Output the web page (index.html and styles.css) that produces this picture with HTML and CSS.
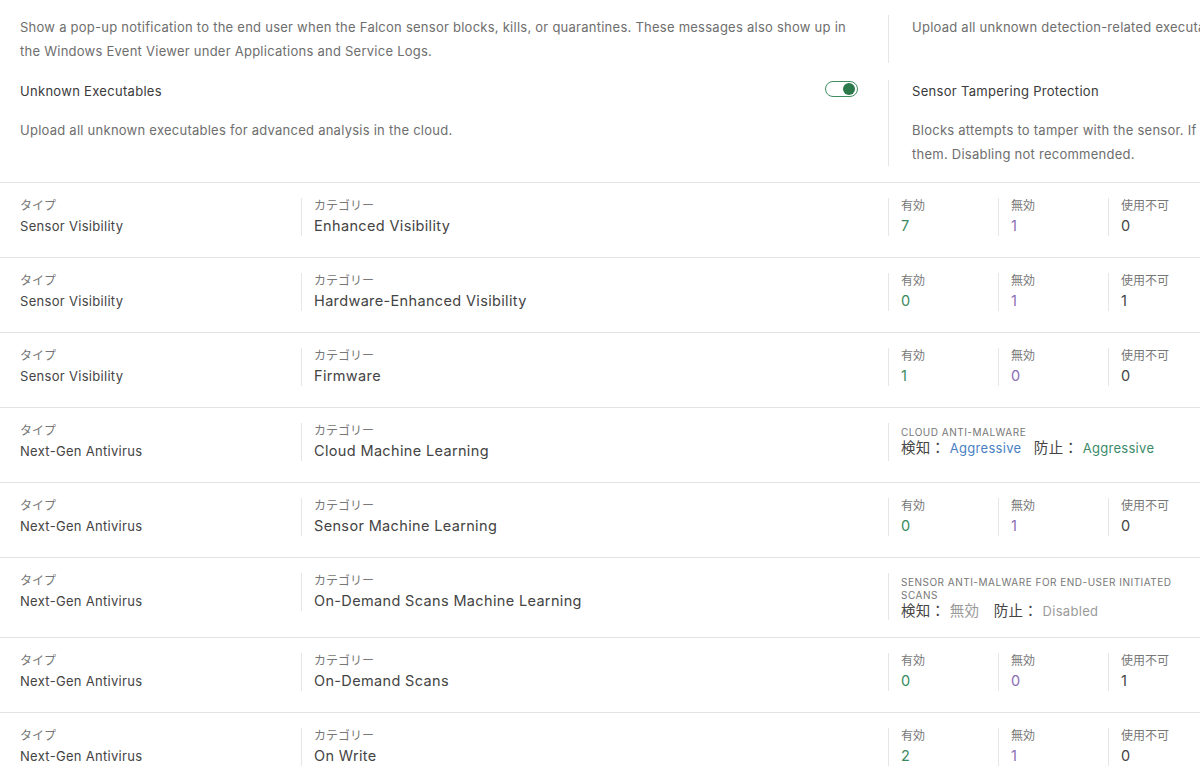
FILE: index.html
```html
<!DOCTYPE html>
<html lang="ja">
<head>
    <meta charset="UTF-8">
    <meta name="viewport" content="width=device-width, initial-scale=1.0">
    <title>Prevention Policy</title>
    <link rel="stylesheet" href="styles.css">
</head>
<body>
    <div class="page">
        <div class="settings">
            <div class="setting">
                <p class="desc">Show a pop-up notification to the end user when the Falcon sensor blocks, kills, or quarantines. These messages also show up in the Windows Event Viewer under Applications and Service Logs.</p>
            </div>
            <div class="setting side">
                <p class="desc">Upload all unknown detection-related executables for advanced analysis in the cloud.</p>
            </div>
            <div class="setting">
                <div class="setting-head">
                    <span class="title">Unknown Executables</span>
                    <span class="toggle on"><span class="knob"></span></span>
                </div>
                <p class="desc">Upload all unknown executables for advanced analysis in the cloud.</p>
            </div>
            <div class="setting side">
                <div class="setting-head">
                    <span class="title">Sensor Tampering Protection</span>
                </div>
                <p class="desc">Blocks attempts to tamper with the sensor. If disabled, the sensor does not block attempts to tamper with them. Disabling not recommended.</p>
            </div>
        </div>

        <div class="rows">
            <div class="row">
                <div class="cell type"><div class="label">タイプ</div><div class="value">Sensor Visibility</div></div>
                <div class="cell cat"><div class="label">カテゴリー</div><div class="value">Enhanced Visibility</div></div>
                <div class="counts">
                    <div class="cell count"><div class="label">有効</div><div class="num on">7</div></div>
                    <div class="cell count"><div class="label">無効</div><div class="num off">1</div></div>
                    <div class="cell count"><div class="label">使用不可</div><div class="num na">0</div></div>
                </div>
            </div>
            <div class="row">
                <div class="cell type"><div class="label">タイプ</div><div class="value">Sensor Visibility</div></div>
                <div class="cell cat"><div class="label">カテゴリー</div><div class="value">Hardware-Enhanced Visibility</div></div>
                <div class="counts">
                    <div class="cell count"><div class="label">有効</div><div class="num on">0</div></div>
                    <div class="cell count"><div class="label">無効</div><div class="num off">1</div></div>
                    <div class="cell count"><div class="label">使用不可</div><div class="num na">1</div></div>
                </div>
            </div>
            <div class="row">
                <div class="cell type"><div class="label">タイプ</div><div class="value">Sensor Visibility</div></div>
                <div class="cell cat"><div class="label">カテゴリー</div><div class="value">Firmware</div></div>
                <div class="counts">
                    <div class="cell count"><div class="label">有効</div><div class="num on">1</div></div>
                    <div class="cell count"><div class="label">無効</div><div class="num off">0</div></div>
                    <div class="cell count"><div class="label">使用不可</div><div class="num na">0</div></div>
                </div>
            </div>
            <div class="row">
                <div class="cell type"><div class="label">タイプ</div><div class="value">Next-Gen Antivirus</div></div>
                <div class="cell cat"><div class="label">カテゴリー</div><div class="value">Cloud Machine Learning</div></div>
                <div class="cell ml">
                    <div class="ml-label">Cloud Anti-Malware</div>
                    <div class="ml-value">検知： <span class="level detect">Aggressive</span> 防止： <span class="level prevent">Aggressive</span></div>
                </div>
            </div>
            <div class="row">
                <div class="cell type"><div class="label">タイプ</div><div class="value">Next-Gen Antivirus</div></div>
                <div class="cell cat"><div class="label">カテゴリー</div><div class="value">Sensor Machine Learning</div></div>
                <div class="counts">
                    <div class="cell count"><div class="label">有効</div><div class="num on">0</div></div>
                    <div class="cell count"><div class="label">無効</div><div class="num off">1</div></div>
                    <div class="cell count"><div class="label">使用不可</div><div class="num na">0</div></div>
                </div>
            </div>
            <div class="row">
                <div class="cell type"><div class="label">タイプ</div><div class="value">Next-Gen Antivirus</div></div>
                <div class="cell cat"><div class="label">カテゴリー</div><div class="value">On-Demand Scans Machine Learning</div></div>
                <div class="cell ml">
                    <div class="ml-label">Sensor Anti-Malware for End-User Initiated Scans</div>
                    <div class="ml-value">検知： <span class="level disabled ja">無効</span> 防止： <span class="level disabled">Disabled</span></div>
                </div>
            </div>
            <div class="row">
                <div class="cell type"><div class="label">タイプ</div><div class="value">Next-Gen Antivirus</div></div>
                <div class="cell cat"><div class="label">カテゴリー</div><div class="value">On-Demand Scans</div></div>
                <div class="counts">
                    <div class="cell count"><div class="label">有効</div><div class="num on">0</div></div>
                    <div class="cell count"><div class="label">無効</div><div class="num off">0</div></div>
                    <div class="cell count"><div class="label">使用不可</div><div class="num na">1</div></div>
                </div>
            </div>
            <div class="row">
                <div class="cell type"><div class="label">タイプ</div><div class="value">Next-Gen Antivirus</div></div>
                <div class="cell cat"><div class="label">カテゴリー</div><div class="value">On Write</div></div>
                <div class="counts">
                    <div class="cell count"><div class="label">有効</div><div class="num on">2</div></div>
                    <div class="cell count"><div class="label">無効</div><div class="num off">1</div></div>
                    <div class="cell count"><div class="label">使用不可</div><div class="num na">0</div></div>
                </div>
            </div>
        </div>
    </div>
</body>
</html>
```

FILE: styles.css
```css
body {
    margin: 0;
    background: #fff;
    font-family: Inter, "Noto Sans CJK JP", sans-serif;
    color: #3c3c3c;
    overflow: hidden;
}

.page {
    width: 1600px;
}

p {
    margin: 0;
}

/* top settings block */
.settings {
    display: grid;
    grid-template-columns: 868px 720px;
    row-gap: 17px;
    padding: 15px 0 16px 20px;
    border-bottom: 1px solid #e3e3e3;
}

.setting {
    padding-right: 30px;
}

.setting.side {
    border-left: 1px solid #e6e6e6;
    padding-left: 23px;
    padding-right: 20px;
}

.setting-head {
    display: flex;
    justify-content: space-between;
    align-items: center;
    height: 22px;
    margin-bottom: 16px;
}

.title {
    font-size: 13px;
    letter-spacing: 0.3px;
    color: #3a3a3a;
}

.desc {
    font-size: 13px;
    line-height: 24px;
    letter-spacing: 0.25px;
    color: #6e6e6e;
}

.toggle {
    position: relative;
    width: 31px;
    height: 14px;
    border: 1.5px solid #3f8d5f;
    border-radius: 10px;
    margin-top: -5px;
}

.toggle .knob {
    position: absolute;
    right: 2px;
    top: 1px;
    width: 12px;
    height: 12px;
    border-radius: 50%;
    background: #2c7a4b;
}

/* rows */
.row {
    display: grid;
    grid-template-columns: 281px 587px 1fr;
    align-items: start;
    min-height: 75px;
    box-sizing: border-box;
    padding: 15px 0 17px 20px;
    border-bottom: 1px solid #e3e3e3;
}

.cell {
    min-height: 38px;
}

.cell.cat,
.cell.count,
.cell.ml {
    border-left: 1px solid #e6e6e6;
    padding-left: 12px;
}

.label {
    font-size: 12px;
    line-height: 16px;
    color: #777;
}

.value {
    margin-top: 2px;
    font-size: 13px;
    line-height: 20px;
    letter-spacing: 0.3px;
    color: #444;
}

.cat .value {
    font-size: 14.5px;
    letter-spacing: 0.35px;
}

.counts {
    display: grid;
    grid-template-columns: 110px 110px 110px;
}

.num {
    margin-top: 2px;
    font-size: 14.5px;
    line-height: 20px;
}

.num.on {
    color: #3a8a60;
}

.num.off {
    color: #8b6db5;
}

.num.na {
    color: #444;
}

.ml {
    padding-top: 3px;
    box-sizing: border-box;
    max-width: 300px;
    padding-right: 10px;
}

.ml-label {
    font-size: 10px;
    line-height: 13px;
    letter-spacing: 0.5px;
    text-transform: uppercase;
    color: #777;
}

.ml-value {
    font-size: 14.5px;
    line-height: 18px;
    color: #444;
    letter-spacing: 0.3px;
}

.level {
    font-size: 13px;
    margin-right: 8px;
}

.level.ja {
    font-size: 14.5px;
    margin-right: 10px;
}

.level.detect {
    color: #4a80c2;
}

.level.prevent {
    color: #3a8a6a;
}

.level.disabled {
    color: #9a9a9a;
}
```
